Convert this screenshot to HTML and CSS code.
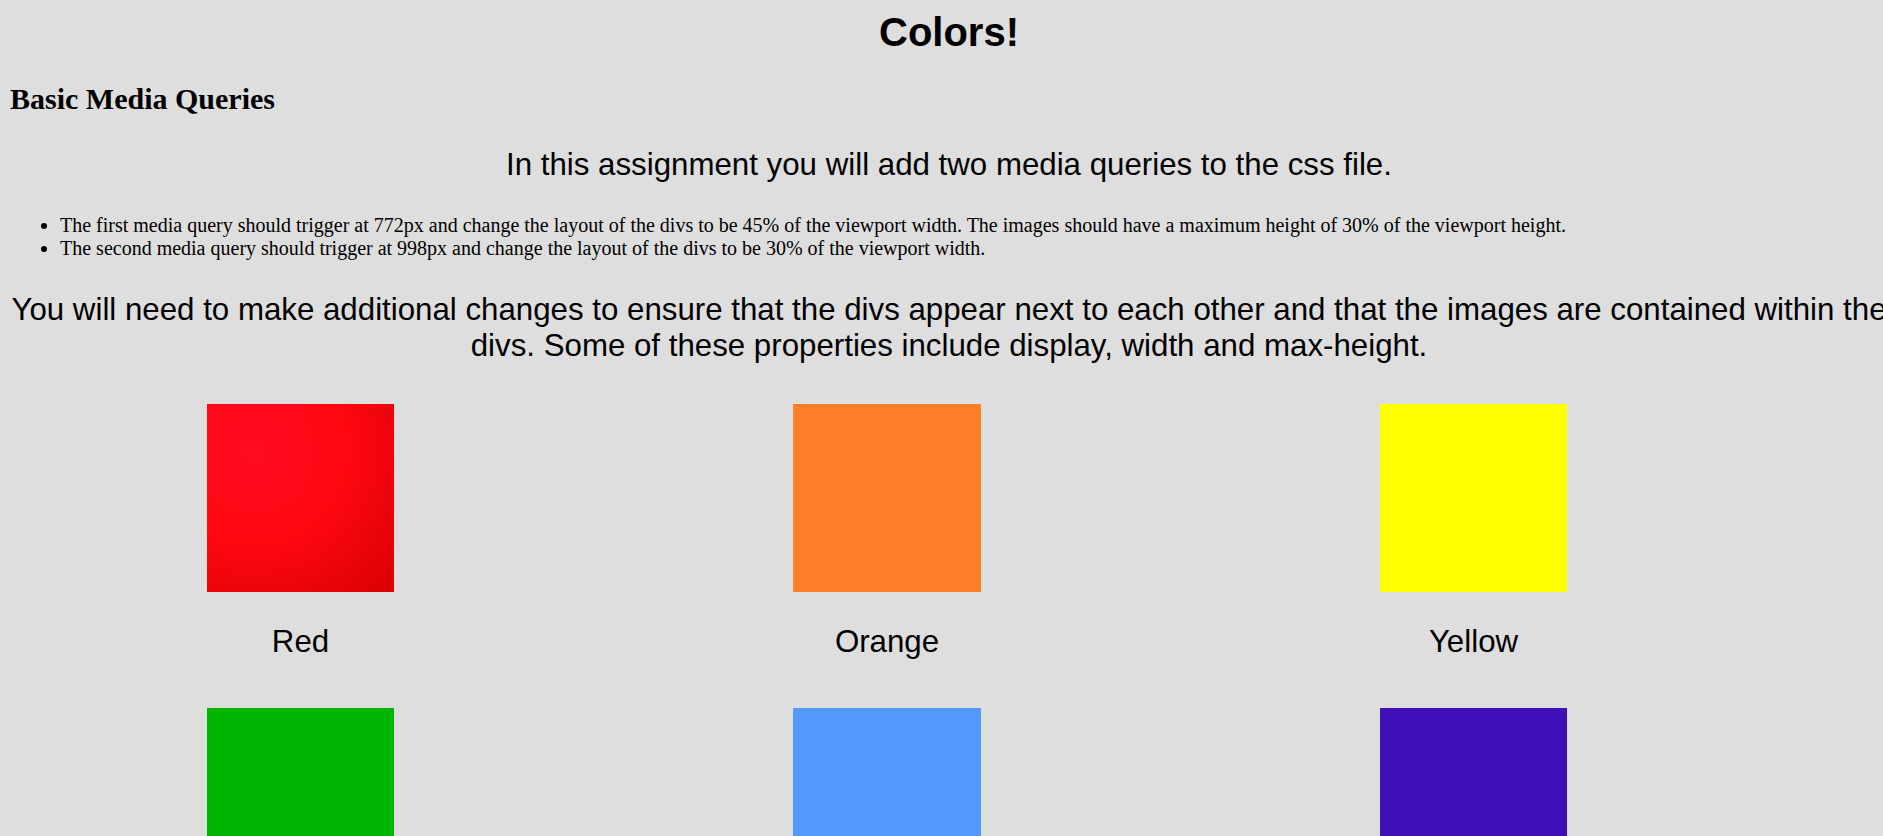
FILE: index.html
```html
<!DOCTYPE html>
<html lang="en">
<head>
<meta charset="utf-8">
<title>Colors!</title>
<link rel="stylesheet" href="styles.css">
</head>
<body>
<h1 class="title">Colors!</h1>
<h2 class="subtitle">Basic Media Queries</h2>
<p class="lead">In this assignment you will add two media queries to the css file.</p>
<ul class="tasks">
  <li>The first media query should trigger at 772px and change the layout of the divs to be 45% of the viewport width. The images should have a maximum height of 30% of the viewport height.</li>
  <li>The second media query should trigger at 998px and change the layout of the divs to be 30% of the viewport width.</li>
</ul>
<p class="lead">You will need to make additional changes to ensure that the divs appear next to each other and that the images are contained within the divs. Some of these properties include display, width and max-height.</p>
<div class="gallery">
  <div class="card"><div class="swatch red"></div><p class="label">Red</p></div>
  <div class="card"><div class="swatch orange"></div><p class="label">Orange</p></div>
  <div class="card"><div class="swatch yellow"></div><p class="label">Yellow</p></div>
  <div class="card"><div class="swatch green"></div><p class="label">Green</p></div>
  <div class="card"><div class="swatch blue"></div><p class="label">Blue</p></div>
  <div class="card"><div class="swatch purple"></div><p class="label">Purple</p></div>
</div>
</body>
</html>
```

FILE: styles.css
```css
html {
  overflow: hidden;
  background: #dedede;
}
body {
  margin: 10px;
  width: 1878px;
  background: #dedede;
  color: #000;
  font-family: "Liberation Serif", "Times New Roman", serif;
  font-size: 20px;
}
.title {
  margin: 0 0 26.8px;
  font-family: "Liberation Sans", Arial, sans-serif;
  font-size: 40px;
  font-weight: bold;
  text-align: center;
}
.subtitle {
  margin: 24.9px 0;
  font-size: 30px;
  font-weight: bold;
}
.lead {
  margin: 31.25px 0;
  font-family: "Liberation Sans", Arial, sans-serif;
  font-size: 31.25px;
  text-align: center;
}
.tasks {
  margin: 21px 0;
  padding-left: 50px;
}
.gallery {
  margin-top: 40px;
  display: flex;
  flex-wrap: wrap;
  column-gap: 5.5px;
}
.card {
  width: 581px;
  padding-bottom: 48px;
  text-align: center;
}
.swatch {
  width: 187.5px;
  height: 188px;
  margin: 0 auto;
}
.label {
  margin: 32.5px 0 0;
  font-family: "Liberation Sans", Arial, sans-serif;
  font-size: 31.25px;
}
.red { background: radial-gradient(circle at 25% 25%, #ff0c24 0%, #ff0812 45%, #d80003 100%); }
.orange { background: #fe7f27; }
.yellow { background: #ffff00; }
.green { background: #00b400; }
.blue { background: #5599ff; }
.purple { background: #3f0fba; }
```
